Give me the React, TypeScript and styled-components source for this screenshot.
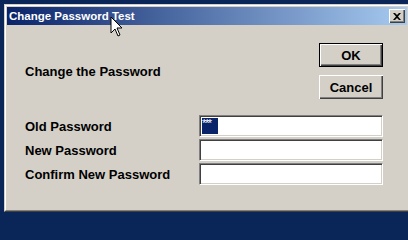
import React from "react"
import { createGlobalStyle, styled } from "styled-components"

const GlobalStyle = createGlobalStyle`
  html, body {
    margin: 0;
    padding: 0;
    width: 408px;
    height: 215px;
    overflow: hidden;
    background: #0a2558;
  }
  body {
    font-family: "Liberation Sans", Arial, sans-serif;
  }
`

const Desktop = styled.div`
  padding: 4px 0 0 4px;
`

const Window = styled.div`
  position: relative;
  width: 406px;
  height: 208px;
  box-sizing: border-box;
  border: 1px solid;
  border-color: #d4d0c8 #404040 #404040 #d4d0c8;
  background: #d4d0c8;
`

const Frame = styled.div`
  height: 100%;
  box-sizing: border-box;
  border: 1px solid;
  border-color: #ffffff #808080 #808080 #ffffff;
  padding: 1px;
  display: flex;
  flex-direction: column;
`

const TitleBar = styled.div`
  height: 18px;
  display: flex;
  align-items: center;
  justify-content: space-between;
  padding: 0 2px;
  background: linear-gradient(to right, #0a246a, #a6caf0);
  flex-shrink: 0;
`

const Title = styled.span`
  color: #ffffff;
  font-weight: bold;
  font-size: 11.5px;
`

const CloseBox = styled.div`
  width: 16px;
  height: 14px;
  box-sizing: border-box;
  background: #d4d0c8;
  box-shadow: inset 1px 1px #ffffff, inset -1px -1px #404040, inset -2px -2px #808080;
  display: flex;
  align-items: center;
  justify-content: center;
`

const Body = styled.div`
  padding: 18px 0 0 18px;
  width: 358px;
  display: flex;
  flex-direction: column;
  gap: 16px;
`

const TopRow = styled.div`
  display: flex;
  align-items: center;
  justify-content: space-between;
`

const Label = styled.span`
  font-size: 13px;
  font-weight: bold;
  color: #000000;
`

const Buttons = styled.div`
  display: flex;
  flex-direction: column;
  gap: 8px;
`

const Button = styled.button<{ $default?: boolean }>`
  width: 64px;
  height: 24px;
  margin: 0;
  padding: 0;
  font-family: "Liberation Sans", Arial, sans-serif;
  font-size: 13px;
  font-weight: bold;
  color: #000000;
  background: #d4d0c8;
  border: ${(p) => (p.$default ? "1px solid #000000" : "none")};
  box-shadow: inset 1px 1px #ffffff, inset -1px -1px #404040, inset -2px -2px #808080;
`

const Form = styled.div`
  display: grid;
  grid-template-columns: 174px 184px;
  row-gap: 2px;
  align-items: center;
`

const Field = styled.div`
  height: 22px;
  box-sizing: border-box;
  background: #ffffff;
  border: 1px solid;
  border-color: #808080 #ffffff #ffffff #808080;
  box-shadow: inset 1px 1px #404040, inset -1px -1px #d4d0c8;
  padding: 2px 0 0 2px;
`

const Selected = styled.span`
  display: block;
  width: 16px;
  height: 16px;
  overflow: hidden;
  background: #0a246a;
  color: #ffffff;
  font-size: 11px;
  line-height: 11px;
  letter-spacing: -1.4px;
  font-family: "Liberation Sans", Arial, sans-serif;
`

const Cursor = styled.svg`
  position: absolute;
  left: 105px;
  top: 11px;
`

export default function App() {
  return (
    <>
      <GlobalStyle />
      <Desktop>
        <Window>
          <Frame>
            <TitleBar>
              <Title>Change Password Test</Title>
              <CloseBox>
                <svg width="8" height="7" viewBox="0 0 8 7">
                  <path d="M0 0h2l2 2 2-2h2L5 3.5 8 7H6L4 5 2 7H0l3-3.5z" fill="#000" />
                </svg>
              </CloseBox>
            </TitleBar>
            <Body>
              <TopRow>
                <Label>Change the Password</Label>
                <Buttons>
                  <Button $default>OK</Button>
                  <Button>Cancel</Button>
                </Buttons>
              </TopRow>
              <Form>
                <Label>Old Password</Label>
                <Field>
                  <Selected>***</Selected>
                </Field>
                <Label>New Password</Label>
                <Field />
                <Label>Confirm New Password</Label>
                <Field />
              </Form>
            </Body>
          </Frame>
          <Cursor width="13" height="21" viewBox="0 0 13 21">
            <path d="M1 1v16l4-4 3 7 2-1-3-7h5z" fill="#fff" stroke="#000" strokeWidth="1" strokeLinejoin="miter" />
          </Cursor>
        </Window>
      </Desktop>
    </>
  )
}
